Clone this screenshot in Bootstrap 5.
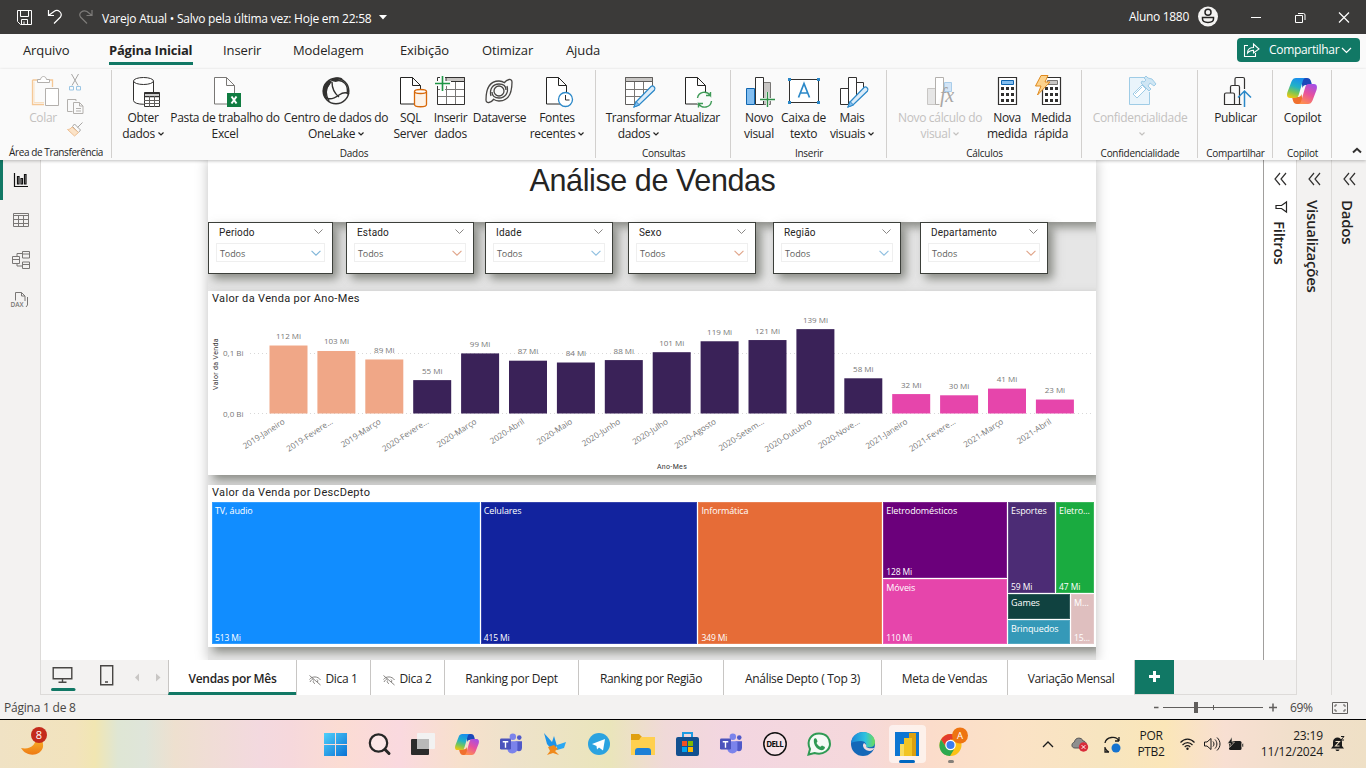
<!DOCTYPE html>
<html lang="pt-BR">
<head>
<meta charset="utf-8">
<title>Varejo Atual</title>
<link rel="stylesheet" href="https://cdn.jsdelivr.net/npm/bootstrap@5.3.0/dist/css/bootstrap.min.css">
<style>
:root{--teal:#117865;--rail:#f3f2f1}
body{font-family:"Open Sans","Noto Sans",sans-serif;font-size:12px;line-height:16px;letter-spacing:-.3px;color:#252423;width:1366px;height:768px;overflow:hidden;background:#fff}
svg{display:block;overflow:visible;flex:none}
svg:not([fill]){fill:none}

/* title bar and menu */
.titlebar{height:34px;background:#3b3a39;color:#fff;padding-left:16px}
.titlebar .doc{padding:4px 0 0 6px;letter-spacing:-.24px}
.controls{gap:34px;margin:0 13px 0 38px}
.menu{height:35px;background:#fafafa;font-size:13px;letter-spacing:-.1px}
.menu a{color:#252423;text-decoration:none;height:31px;line-height:32px;white-space:nowrap}
.menu a+a{margin-left:var(--g)}
.menu a:nth-child(1){width:48px;margin-left:23px}.menu a:nth-child(2){width:84px;--g:38px}.menu a:nth-child(3){width:39px;--g:30px}.menu a:nth-child(4){width:75px;--g:31px}.menu a:nth-child(5){width:50px;--g:32px}.menu a:nth-child(6){width:54px;--g:32px}.menu a:nth-child(7){width:37px;--g:30px}
.menu .on{font-weight:700;border-bottom:3px solid var(--teal);letter-spacing:-.22px}
.share{background:var(--teal);color:#fff;width:123px;height:24px;border-radius:4px;margin:4px 6px 0 auto;font-size:12px;letter-spacing:-.32px}

/* ribbon */
.ribbon{height:91px;background:#fafafa;position:relative;z-index:3;box-shadow:0 1px 3px rgba(0,0,0,.25)}
.grp{height:90px;padding-top:6px;position:relative;display:flex;flex-direction:column}
.grp:not(:last-child)::after{content:"";position:absolute;right:0;top:1px;height:88px;width:1px;background:#d2d0ce}
.grp .lbl{margin-top:auto;margin-bottom:-1px}
.cmd{text-align:center;white-space:nowrap;letter-spacing:-.33px}
.cmd svg{width:32px;height:32px;margin:0 auto 3px}
.cmd .chev{width:6px;height:4px;display:inline-block;margin:0 0 1px 3px}
.lbl{font-size:10px;line-height:13px;text-align:center;letter-spacing:-.28px;white-space:nowrap;height:13px}
.g1 .lbl{letter-spacing:-.4px}
.off{color:#c3c1bf}
.g1{width:112px}.g2{width:484px}.g3{width:135px}.g4{width:156px}.g5{width:195px}.g6{width:116px}.g7{width:75px}.g8{width:59px}
.w52{width:52px}.w112{width:112px}.w110{width:110px}.w39{width:39px}.w41{width:41px}.w57{width:57px}.w58{width:58px}.w67{width:67px}.w50{width:50px}.w40{width:40px}.w49{width:49px}.w48{width:48px}.w92{width:92px}.w42{width:42px}.w46{width:46px}
.pl5{padding-left:5px}.pl9{padding-left:9px}.pl8{padding-left:8px}.pl7{padding-left:7px}
.clip{width:54px;margin-left:16px}
.minis{margin:-1px 0 0 -3px}.minis svg{margin-bottom:7px}
.g3 .cmd{letter-spacing:-.4px}

/* report area */
.work{height:535px}
.rail{width:41px;background:var(--rail);border-right:1px solid #dddbd9}
.rail>div{height:40px;padding-left:12px}
.rail .sel{border-left:3px solid var(--teal);padding-left:9px}
.stage{height:500px;overflow:hidden}
.stage-l{width:167px}.stage-r{width:167px}
.page{width:888px;background:#e6e6e6;box-shadow:0 0 12px rgba(0,0,0,.25);overflow:hidden}
.vis{background:#fff;box-shadow:5px 5px 9px rgba(105,108,100,.75)}
.head{height:62px;font:30.500px/41px "Liberation Sans",sans-serif;letter-spacing:-.4px;text-align:center;padding-left:1px}
.slicers{height:69px}
.slicer{height:52px;border:1px solid #3c3f3a;padding:4px 7px 0 7px}
.slicer b{font:400 10px/12px Roboto,sans-serif;letter-spacing:.18px;padding-left:3px}
.slicer .box{height:19px;border:1px solid #efefef;margin-top:4px;padding:2px 3px 0 3px;font-size:9px;letter-spacing:-.1px;color:#605e5c}
.slicer .hd{padding-right:2px}
.vtitle{font:400 11px/15px Roboto,sans-serif;letter-spacing:.33px;color:#252423;padding-left:4px}
.chart{height:184px;margin-bottom:10px}
.tree{height:162px}
.tiles{height:142px;margin:2px 2px 0 4px;gap:1px;color:#fff;font-size:9px;line-height:11px;letter-spacing:-.12px}
.tile{padding:3px 0 1px 3px;display:flex;flex-direction:column;justify-content:space-between;white-space:nowrap;box-shadow:inset 0 0 0 1px rgba(255,255,255,.15)}
.tile span{font-size:8.500px}
.gap1{gap:1px}
.t1{width:268px;background:#118dff}.t2{width:217px;background:#12239e}.t3{width:184px;background:#e66c37}
.c4{width:124px}.t4{height:76px;background:#6b007b}.t5{background:#e645ab}
.c5{width:86px}.t6{width:47px;background:#4c2c75}.t7{background:#1aab40}.r1{height:91px}
.t8{height:25px;background:#104240}.t9{background:#3599b8}.cc{width:62px}.t10{background:#dfbfbf}

/* side panes, page tabs, status */
.pane{width:35px;background:var(--rail);border-left:1px solid #dddbd9;padding-top:13px}
.pane.filt{width:33px;background:#fff;border-left:1px solid #a19f9d}
.vert{writing-mode:vertical-rl;font-size:15px;line-height:18px;font-weight:600;letter-spacing:-.25px}
.f1{margin-top:8px}.f2{margin-top:15px;position:relative;left:-1px}
.tabs{height:35px;background:var(--rail);border-bottom:1px solid #dddbd9}
.views{width:127px;padding-left:11px}.views svg:nth-child(2){margin-left:26px}.views svg:nth-child(3){margin-left:20px}
.tabp{background:#fff;border-left:1px solid #c8c6c4;text-align:center;line-height:37px;height:35px;letter-spacing:-.32px;white-space:nowrap}
.tabp.on{border-bottom:3px solid var(--teal);font-weight:600;line-height:38px}
.p1{width:128px}.p2{width:74px;padding-top:2px}.p3{width:134px}.p4{width:145px}.p5{width:158px}.p6{width:126px}.p7{width:127px}
.plus{width:40px;background:var(--teal);margin-right:auto;border-left:1px solid #c8c6c4}
.status{height:25px;background:var(--rail);border-bottom:1px solid #000;color:#484644;padding:2px 0 0 4px;letter-spacing:-.22px}
.zoomer{width:128px;margin-right:8px}.pct{width:42px;letter-spacing:-.4px}.fitp{margin-right:18px}

/* taskbar */
.task{height:48px;background:linear-gradient(90deg,#f0e2c4 0,#f2e3bd 75px,#f1e6b2 95px,#dfe6d4 118px,#dfe5da 145px,#eee0cf 175px,#f3d9df 260px,#f6d8dc 290px,#fbdcd3 340px,#fad9df 400px,#f7e0cc 460px,#eee2cb 510px,#eae5bb 610px,#f0d9d8 665px,#f3d6e1 730px,#f5d8dc 850px,#fbdccb 930px,#fbe2c6 1010px,#f7e5c0 1100px,#fbe6b8 1165px,#f8dfd2 1225px,#f1dfcb 1290px,#efe0c6 1366px);letter-spacing:-.35px;color:#1b1b1b}
.app{width:44px;height:48px;display:flex;align-items:center;justify-content:center;position:relative}
.app.live::before{content:"";position:absolute;inset:5px 3px 5px 4px;background:rgba(255,255,255,.6);border-radius:4px}
.app.live::after{content:"";position:absolute;left:14px;bottom:5px;width:16px;height:3px;border-radius:2px;background:#0067c0}
.app.idle::after{content:"";position:absolute;left:19px;bottom:5px;width:6px;height:3px;border-radius:2px;background:#85807a}
.app svg{position:relative;z-index:1}
.wx{width:313px;padding-left:21px}
.tray{margin-left:66px}
.tray>*{flex:none}
.s1{margin-left:3px}.s2{margin-left:18px}.s3{margin-left:14px}.kb{width:42px;margin-left:9px}.s4{margin-left:8px}.s5{margin-left:9px}.s6{margin-left:8px}.clock{width:67px;margin-left:11px;letter-spacing:-.15px}.s7{margin-left:8px}
</style>
</head>
<body>
<svg width="0" height="0" class="position-absolute">
<defs>
<linearGradient id="ca" x1=".5" y1="0" x2=".2" y2="1"><stop offset="0" stop-color="#1a8fec"/><stop offset=".4" stop-color="#22b2c6"/><stop offset=".7" stop-color="#7cc653"/><stop offset="1" stop-color="#f6c70e"/></linearGradient>
<linearGradient id="cb" x1=".8" y1="0" x2=".3" y2="1"><stop offset="0" stop-color="#a34ee8"/><stop offset=".5" stop-color="#e8519d"/><stop offset="1" stop-color="#ff8f4f"/></linearGradient>
<symbol id="copilot" viewBox="0 0 30 26" overflow="visible">
<path fill="#1b48ba" d="M14 0h6c2.500 0 3.500 1.500 4.200 4L25 7h-6c-2 0-3 1-3.500 3z"/>
<path fill="#f0702e" d="M16 26h-6c-2.500 0-3.500-1.500-4.200-4L5 19h6c2 0 3-1 3.500-3z"/>
<path fill="url(#ca)" d="M9 0h10c-2 0-2.800 1.500-3.500 4L12 16c-.8 2.500-1.500 4-4 4H3C0 20-.5 17 .5 14L4.500 3.500C5.500 1 7 0 9 0z"/>
<path fill="url(#cb)" d="M21 26H11c2 0 2.800-1.500 3.500-4L18 10c.8-2.500 1.500-4 4-4h5c3 0 3.500 3 2.500 6l-4 10.500C24.500 25 23 26 21 26z"/>
</symbol>
<symbol id="chev" viewBox="0 0 6 4" overflow="visible"><path d="M.5.5 3 3 5.500.5" fill="none" stroke="currentColor" stroke-width="1.200"/></symbol>
<symbol id="drop" viewBox="0 0 9 5" overflow="visible"><path d="M.5.5l4 4 4-4" fill="none" stroke="currentColor"/></symbol>
<symbol id="teams" viewBox="0 0 26 24" overflow="visible"><circle cx="15" cy="4" r="3.500" fill="#7b83eb"/><circle cx="22" cy="5" r="2.500" fill="#5059c9"/><path fill="#5059c9" d="M18 9h7v7c0 5-6 5-7 1z"/><path fill="#7b83eb" d="M9 9h11v8c0 7-11 7-11 0z"/><rect x="1" y="6" width="12" height="12" rx="1.500" fill="#4b53bc"/><path stroke="#fff" stroke-width="1.500" d="M4 9.500h6M7 9.500V16"/></symbol>
<symbol id="doc" viewBox="0 0 32 32" overflow="visible"><path fill="#fff" stroke="currentColor" d="M5.500 2.500h12l8 8v18.500h-20zM17.500 2.500v8h8"/></symbol>
<symbol id="hide" viewBox="0 0 12 10" overflow="visible"><path fill="none" stroke="#797775" stroke-width=".9" d="M.5 5.500C3 2 9 2 11.500 6M1 8c1-2 2-2.600 3.500-3M.5 1.500l11 9.500M6 9.500a2 2 0 0 1-1.500-3M8 5.500a2 2 0 0 1 .5 2.500"/></symbol>
</defs></svg>

<header class="titlebar d-flex align-items-center">
 <svg width="16" height="16" stroke="#fff"><path d="M1.500 1.500h14v14h-11l-3-3zM4.500 1.500v6h8v-6M5.500 15.500v-5h6v5M8 12.500v3"/></svg>
 <svg width="16" height="16" class="ms-3" stroke="#fff" stroke-width="1.200"><path d="M.5 1v5.500H6M.5 6.500 6 2.500c4-3 9 1.500 6.500 5.500L6 14.500"/></svg>
 <svg width="16" height="16" class="ms-3" stroke="#7d7b79" stroke-width="1.200"><path d="M12 1v5.500H6.500M12 6.500 7 2.500C3 .5-2 4 .5 8L7 14.500"/></svg>
 <span class="doc">Varejo Atual • Salvo pela última vez: Hoje em 22:58</span>
 <svg width="8" height="5" class="ms-2" fill="#fff"><path d="M-1 0h8L3 4.500z"/></svg>
 <span class="ms-auto">Aluno 1880</span>
 <svg width="20" height="20" class="ms-2"><circle cx="11" cy="9.500" r="10" fill="#f3f2f1"/><g stroke="#252423" stroke-width="1.500"><circle cx="11" cy="5.300" r="3"/><path d="M5.500 10.500h11V12c0 4.500-11 4.500-11 0z"/></g></svg>
 <div class="controls d-flex align-items-center">
  <svg width="10" height="10" stroke="#fff"><path d="M-4 5.500h10"/></svg>
  <svg width="10" height="10" stroke="#fff"><path d="M-3.500 3.500h7v7h-7zM-1 1.500h5.500A1.500 1.500 0 0 1 6 3v5"/></svg>
  <svg width="10" height="10" stroke="#fff" stroke-width="1.200"><path d="M-4 .5l10 10M6 .5l-10 10"/></svg>
 </div>
</header>

<nav class="menu d-flex">
 <a>Arquivo</a><a class="on">Página Inicial</a><a>Inserir</a><a>Modelagem</a><a>Exibição</a><a>Otimizar</a><a>Ajuda</a>
 <div class="share d-flex align-items-center">
  <svg width="16" height="14" class="ms-2" stroke="#fff" stroke-width="1.100"><path d="M3 2.500H-.5v11h11V10M2.500 10c0-4 3-5.500 6-5.500V1L14 6 8.500 10V7.200c-3 0-4.500.8-6 2.800z"/></svg>
  <span class="flex-fill ps-1 ms-1">Compartilhar</span>
  <svg width="9" height="5" class="me-2" stroke="#fff" stroke-width="1.200"><path d="M-1 0l4.500 4.500L8 0"/></svg>
 </div>
</nav>

<section class="ribbon d-flex">
 <div class="grp g1"><div class="d-flex off">
   <div class="cmd clip"><svg viewBox="0 0 32 32"><path stroke="#f5c896" stroke-width="1.300" d="M5.500 5v24.500H17M5.500 5H11M22 5h3.500v7"/><path stroke="#f8dfc0" d="M7 6.500v21h10"/><path fill="#fff" stroke="#b3b0ad" d="M10.500 7.500v-3h3c.5-4 5.500-4 6 0h3v3zM18.500 13.500h13v17h-13z"/></svg>Colar</div>
   <div class="minis">
    <svg width="17" height="17"><path stroke="#a8a6a4" d="M4.500 0l6.500 11.500M11.500 0L5 11.500"/><path stroke="#9cc6e4" d="M2.500 12.500h4v3.500h-4zM9.500 12.500h4v3.500h-4z"/></svg>
    <svg width="17" height="17" stroke="#b3b0ad"><path d="M9 3V1.500H.5v12h5M6.500 4.500h6l3.500 3.500v7.500H6.500zM12.500 4.500V8H16M9 10.500h5M9 13h5"/></svg>
    <svg width="17" height="17"><path stroke="#a8a6a4" d="M15.500.5l-5 5M5.500 4.500l6 6 2-2.500-6-6z"/><path fill="#fbe3c8" stroke="#eebf93" d="M5 5C3.500 7 2 7.500 .5 7.500l7 6.500 4-3.500z"/></svg>
   </div></div><div class="lbl mt-0">Área de Transferência</div></div>
 <div class="grp g2"><div class="d-flex pl5">
   <div class="cmd w52"><svg viewBox="0 0 32 32"><path stroke="#323130" fill="#fff" d="M6.500 6v19.500c0 5 20 5 20 0V6"/><ellipse cx="16.500" cy="6" rx="10" ry="3.500" fill="#fff" stroke="#323130"/><path fill="#fff" stroke="#323130" d="M17.500 17.500h15v14h-15z"/><path stroke="#323130" stroke-width="1.500" d="M17 18.500h16M17 21.500h16"/><path stroke="#605e5c" d="M17 25.500h16M17 28.500h16M22.500 21v11M27.500 21v11"/></svg>Obter<br>dados<svg class="chev"><use href="#chev"/></svg></div>
   <div class="cmd w112"><svg viewBox="0 0 32 32"><use href="#doc" color="#797775"/><rect x="18" y="18" width="14" height="14" fill="#107c41"/><path stroke="#fff" stroke-width="2" d="M22.500 21.500l5 7M27.500 21.500l-5 7"/></svg>Pasta de trabalho do<br>Excel</div>
   <div class="cmd w110"><svg viewBox="0 0 32 32"><path fill="#323130" d="M11 6C12 2 21 1 23 4.500c-3-.5-6 .5-7 2.500zM10 5C2 9 0 20 8 25 5 20 6 12 12 7z"/><circle cx="16" cy="16" r="12.800" stroke="#323130" stroke-width="1.500"/><path stroke="#323130" stroke-width="1.400" d="M10 8c-5 6-4 13-1 18M12 7c0 6 2 11 7 15M16 6c7-2 13 4 11 13M5 22c5 4 10 1 14-2 3-2 7-3 10-1"/></svg>Centro de dados do<br>OneLake<svg class="chev"><use href="#chev"/></svg></div>
   <div class="cmd w39"><svg viewBox="0 0 32 32"><use href="#doc"/><path fill="#fdf3e8" stroke="#d8690a" stroke-width="1.300" d="M19.500 16.500v13c0 3 12 3 12 0v-13"/><ellipse cx="25.500" cy="16.500" rx="6" ry="2" fill="#fff" stroke="#d8690a" stroke-width="1.300"/></svg>SQL<br>Server</div>
   <div class="cmd w41"><svg viewBox="0 0 32 32"><path fill="#fff" stroke="#323130" d="M2.500 2.500h27v27h-27z"/><path fill="#c8c6c4" stroke="#323130" d="M11 2.500h18.500v4H11z"/><path stroke="#797775" d="M3 14.500h26M3 21.500h26M11.500 7v22M20.500 7v22"/><path stroke="#fafafa" stroke-width="5" d="M0 8.500h16M7.500 1v14"/><path stroke="#1d9544" stroke-width="1.600" d="M0 8.500h15M7.500 1v15"/></svg>Inserir<br>dados</div>
   <div class="cmd w57"><svg viewBox="0 0 32 32" stroke="#484644" stroke-width="1.300"><path d="M20 8c3-4 8-5 8-1 0 10-3 19-13 19-3 0-6-2-6-2M10 24c-3 4-8 5-8 1C2 15 5 6 15 6c3 0 6 2 6 2"/><circle cx="15" cy="16" r="5"/><path d="M7 21c-2-7 2-12 8-12 4 0 7 2 7 6M23 11c2 7-2 12-8 12-4 0-7-2-7-6"/></svg>Dataverse</div>
   <div class="cmd w58"><svg viewBox="0 0 32 32"><use href="#doc"/><circle cx="24.500" cy="24.500" r="7" fill="#fff" stroke="#2b88c8" stroke-width="1.300"/><path stroke="#323130" d="M24.500 20v5h4"/></svg>Fontes<br>recentes<svg class="chev"><use href="#chev"/></svg></div>
 </div><div class="lbl">Dados</div></div>
 <div class="grp g3"><div class="d-flex pl9">
   <div class="cmd w67"><svg viewBox="0 0 32 32"><path fill="#fff" stroke="#605e5c" d="M2.500 2.500h27v27h-27z"/><path fill="#c8c6c4" stroke="#605e5c" d="M2.500 2.500h27v4h-27z"/><path stroke="#797775" d="M3 14.500h26M3 21.500h26M11.500 7v22M20.500 7v22"/><path fill="#fafafa" d="M12 32l20-22v22z"/><path fill="#dcecf9" stroke="#2b88c8" stroke-width="1.200" d="M13 27L28 11.500c2-1.500 5 1 3.500 3.500L16 30l-5 2z"/><path fill="#83bef0" stroke="#2b88c8" d="M13 26.500l3.500 3.500-5.500 2z"/></svg>Transformar<br>dados<svg class="chev"><use href="#chev"/></svg></div>
   <div class="cmd w50"><svg viewBox="0 0 32 32"><use href="#doc" x="-1"/><circle cx="23.500" cy="25" r="8" fill="#fafafa"/><path stroke="#3e9a56" stroke-width="1.400" d="M16.500 23c1-6 9-8 13-2.500V17M30 20.500h-5M30.500 26c-1 7-9 8-13 3v3.500M17 28.500h5"/></svg>Atualizar</div>
 </div><div class="lbl">Consultas</div></div>
 <div class="grp g4"><div class="d-flex pl8">
   <div class="cmd w40"><svg viewBox="0 0 32 32"><path fill="#83bef0" stroke="#1066b0" d="M3.500 13.500h8v16h-8z"/><path fill="#c8c6c4" stroke="#797775" d="M20.500 7.500h7v22h-7z"/><path fill="#fff" stroke="#323130" d="M12.500 2.500h8v27h-8z"/><path stroke="#fafafa" stroke-width="3" d="M17 24.500h15M24.500 17v15"/><path stroke="#2f9048" stroke-width="1.400" d="M17 24.500h15M24.500 17v15"/></svg>Novo<br>visual</div>
   <div class="cmd w49"><svg viewBox="0 0 32 32"><path fill="#fff" stroke="#323130" d="M1.500 4.500h29v23h-29z"/><path fill="#2b88c8" d="M0 3h3v3H0zM29 3h3v3h-3zM0 26h3v3H0zM29 26h3v3h-3z"/><path stroke="#2b88c8" stroke-width="1.700" d="M10.500 22.500l5.500-14 5.500 14M12.500 18h7"/></svg>Caixa de<br>texto</div>
   <div class="cmd w48"><svg viewBox="0 0 32 32"><path fill="#fff" stroke="#323130" d="M4.500 13.500h8v16h-8zM20.500 7.500h7v22h-7zM12.500 2.500h8v27h-8z"/><path fill="#fafafa" d="M13 32l16-18v17z"/><path fill="#dcecf9" stroke="#2b88c8" stroke-width="1.200" d="M14 27L28 12.500c2-1.500 5 1 3.500 3.500L17 30l-5 2z"/><path fill="#83bef0" stroke="#2b88c8" d="M14 26.500l3.500 3.500-5.500 2z"/></svg>Mais<br>visuais<svg class="chev"><use href="#chev"/></svg></div>
 </div><div class="lbl">Inserir</div></div>
 <div class="grp g5"><div class="d-flex pl7">
   <div class="cmd w92 off"><svg viewBox="0 0 32 32"><path fill="#e6e6e6" stroke="#c8c6c4" d="M3.500 13.500h8v16h-8z"/><path fill="#d3e5f6" stroke="#a9cdea" d="M20.500 7.500h7v9h-7z"/><path fill="#fff" stroke="#b3b0ad" d="M11.500 29.500v-27h8v15M11.500 29.500h4"/><text x="16" y="27" font-family="Liberation Serif" font-style="italic" font-size="20" fill="#a8a6a4" stroke="none">fx</text></svg>Novo cálculo do<br>visual<svg class="chev"><use href="#chev"/></svg></div>
   <div class="cmd w42"><svg viewBox="0 0 32 32"><path fill="#fff" stroke="#323130" stroke-width="1.200" d="M7.500 2.500h18v27h-18z"/><path fill="#83bef0" stroke="#1066b0" d="M10.500 5.500h12v4h-12z"/><path stroke="#323130" stroke-width="3" stroke-dasharray="3 2" d="M10 13.500h13M10 19.500h13M10 25.500h13"/></svg>Nova<br>medida</div>
   <div class="cmd w46"><svg viewBox="0 0 32 32"><path fill="#fff" stroke="#323130" stroke-width="1.200" d="M7.500 2.500h18v27h-18z"/><path fill="#c8c6c4" stroke="#797775" d="M12.500 5.500h10v4h-10z"/><path stroke="#323130" stroke-width="3" stroke-dasharray="3 2" d="M10 13.500h13M10 19.500h13M10 25.500h13"/><path fill="#fcd28c" stroke="#e08a1e" d="M6 .5h7L10 7h5L2.500 20 6 11H.5z"/></svg>Medida<br>rápida</div>
 </div><div class="lbl">Cálculos</div></div>
 <div class="grp g6"><div class="cmd off"><svg viewBox="0 0 32 32" stroke="#9fcce6"><path fill="#e9f4fb" d="M25.500 17v12.500h-20v-27H20"/><path fill="#fff" d="M9 19l9-9 4 4-9 9zM11 19l7-7"/><path fill="#cfe6f4" d="M17 8l8 8 2-2-3-3 2-3 4 3 2-2-4-5-4-1-2-2-2 2 2 2-2 2-2-1z"/></svg>Confidencialidade<br><svg class="chev"><use href="#chev"/></svg></div><div class="lbl">Confidencialidade</div></div>
 <div class="grp g7"><div class="cmd"><svg viewBox="0 0 32 32" stroke="#323130" stroke-width="1.200"><path d="M24.500 14V4A1.500 1.500 0 0 0 23 2.500h-6.500A1.500 1.500 0 0 0 15 4v6.500M19.500 29.500V12a1.500 1.500 0 0 0-1.500-1.500h-6a1.500 1.500 0 0 0-1.500 1.500v6M4.500 29.500V19.500A1.500 1.500 0 0 1 6 18h7a1.500 1.500 0 0 1 1.500 1.500v10zM14 29.500h7.500"/><path stroke="#2b88c8" stroke-width="1.500" d="M24.500 32V16.500M18 22.500l6.500-6.500 6.500 6.500"/></svg>Publicar<br>&nbsp;</div><div class="lbl">Compartilhar</div></div>
 <div class="grp g8"><div class="cmd"><svg viewBox="0 0 32 32"><use href="#copilot" x="0" y="3" width="30" height="26"/></svg>Copilot<br>&nbsp;</div><div class="lbl">Copilot</div></div>
 <div class="ms-auto me-1 align-self-end pb-1"><svg width="10" height="8" stroke="#323130" stroke-width="2"><path d="M1 4.500l4-3.700 4 3.700"/></svg></div>
</section>

<main class="work d-flex">
 <aside class="rail">
  <div class="sel d-flex align-items-center"><svg width="16" height="16" stroke="#111" stroke-width="1.200"><path d="M2.500 1v13.500H16M5.500 4.500H7V12H5.500zM9 6.500h1.500V12H9zM12.500 2.500H14V12h-1.500z"/></svg></div>
  <div class="d-flex align-items-center"><svg width="16" height="16" stroke="#797775"><path d="M1.500 1.500h15v13h-15zM1.500 3.500h15M1.500 7.500h15M1.500 11.500h15M6.500 3.500v11M11.500 3.500v11"/></svg></div>
  <div class="d-flex align-items-center"><svg width="18" height="18" stroke="#797775"><path d="M.5 5.500h7v7h-7zM.5 8.500h7M10.500.5h7v6.500h-7zM10.500 3h7M10.500 11h7v6.500h-7zM10.500 13.500h7M5 5.500V2.500h5.500M5 12.500V15h5.500"/></svg></div>
  <div class="d-flex align-items-center"><svg width="18" height="16" stroke="#797775"><path d="M3.500 8.500V.5h6L13 4v5M9.500.5V4H13M15.500 5v8l-1.500 2"/><text x="-1.500" y="15" font-size="6.500" font-weight="600" stroke="none" fill="#797775" letter-spacing="0">DAX</text></svg></div>
 </aside>
 <div class="d-flex flex-column">
  <div class="stage d-flex">
   <div class="stage-l"></div>
   <div class="page">
    <div class="vis head">Análise de Vendas</div>
    <div class="slicers d-flex" id="slicers"></div>
    <div class="vis chart"><div class="vtitle">Valor da Venda por Ano-Mes</div><svg id="bars" width="888" height="169" viewBox="208 306 888 169"></svg></div>
    <div class="vis tree"><div class="vtitle">Valor da Venda por DescDepto</div>
     <div class="tiles d-flex">
      <div class="tile t1">TV, áudio<span>513 Mi</span></div>
      <div class="tile t2">Celulares<span>415 Mi</span></div>
      <div class="tile t3">Informática<span>349 Mi</span></div>
      <div class="c4 d-flex flex-column gap1"><div class="tile t4">Eletrodomésticos<span>128 Mi</span></div><div class="tile t5 flex-fill">Móveis<span>110 Mi</span></div></div>
      <div class="c5 d-flex flex-column gap1">
       <div class="d-flex gap1 r1"><div class="tile t6">Esportes<span>59 Mi</span></div><div class="tile t7 flex-fill">Eletro...<span>47 Mi</span></div></div>
       <div class="d-flex gap1 flex-fill"><div class="cc d-flex flex-column gap1"><div class="tile t8">Games</div><div class="tile t9 flex-fill">Brinquedos</div></div><div class="tile t10 flex-fill">M...<span>15...</span></div></div>
      </div>
     </div>
    </div>
   </div>
   <div class="stage-r"></div>
   <div class="pane filt d-flex flex-column align-items-center"><svg width="11" height="12" stroke="#323130" stroke-width="1.200"><path d="M5 0L0 6l5 6M11 0L6 6l5 6"/></svg>
    <svg width="12" height="12" class="mt-3" stroke="#252423" stroke-width="1.200"><path d="M12.500 1v10L7.500 7.500H2v-3h5.500z"/></svg><div class="vert f1">Filtros</div></div>
  </div>
  <div class="tabs d-flex">
   <div class="views d-flex">
    <svg width="22" height="30" stroke="#484644" stroke-width="1.400"><path d="M1.200 7.700h18.600v11H1.200zM10.500 19v3M6.500 22.300h8"/><path stroke="#117865" stroke-width="3" stroke-linecap="round" d="M0.500 29.500h21.500"/></svg>
    <svg width="14" height="22" stroke="#484644" stroke-width="1.400"><path d="M.7 5.700h12v19H.7zM5 22h3"/></svg>
    <svg width="28" height="10" fill="#c8c6c4"><path d="M5 13.500v8l-4-4zM22 13.500v8l4.500-4z"/></svg>
   </div>
   <div class="tabp on p1">Vendas por Mês</div>
   <div class="tabp p2 d-flex justify-content-center align-items-center"><svg width="12" height="10" class="me-1"><use href="#hide"/></svg>Dica 1</div>
   <div class="tabp p2 d-flex justify-content-center align-items-center"><svg width="12" height="10" class="me-1"><use href="#hide"/></svg>Dica 2</div>
   <div class="tabp p3">Ranking por Dept</div><div class="tabp p4">Ranking por Região</div><div class="tabp p5">Análise Depto ( Top 3)</div><div class="tabp p6">Meta de Vendas</div><div class="tabp p7">Variação Mensal</div>
   <div class="plus"><svg width="40" height="35" stroke="#fff" stroke-width="3"><path d="M14 16.500h11M19.500 11v11"/></svg></div>
  </div>
 </div>
 <div class="pane d-flex flex-column align-items-center"><svg width="11" height="12" stroke="#323130" stroke-width="1.200"><path d="M5 0L0 6l5 6M11 0L6 6l5 6"/></svg><div class="vert f2">Visualizações</div></div>
 <div class="pane d-flex flex-column align-items-center"><svg width="11" height="12" stroke="#323130" stroke-width="1.200"><path d="M5 0L0 6l5 6M11 0L6 6l5 6"/></svg><div class="vert f2">Dados</div></div>
</main>

<div class="status d-flex align-items-center"><span>Página 1 de 8</span>
 <svg width="128" height="20" class="ms-auto zoomer" stroke="#605e5c"><path stroke-width="1.500" d="M0 9.500h4.500M115 9.500h8M119 5.500v8"/><path d="M9 9.500h100M59.500 7v5"/><path stroke-width="4" d="M42 4v11"/></svg>
 <span class="pct">69%</span>
 <svg width="16" height="12" class="fitp" stroke="#605e5c"><path d="M.5.5h15v11H.5zM5 3H3v2M11 3h2v2M5 9H3V7M11 9h2V7"/></svg>
</div>

<footer class="task d-flex align-items-center">
 <div class="wx"><svg width="28" height="30"><defs><linearGradient id="mn" x2="0" y2="1"><stop stop-color="#fbc02d"/><stop offset="1" stop-color="#ee7a14"/></linearGradient></defs><path fill="url(#mn)" d="M15 6c4 3 8 6 7 12-2 9-16 11-22 1 9 2 16-3 15-13z"/><circle cx="18" cy="6" r="8" fill="#c42b1c"/><text x="18" y="10" font-size="11" fill="#fff" text-anchor="middle" letter-spacing="0">8</text></svg></div>
 <div class="app"><svg width="23" height="23"><defs><linearGradient id="wn" x2="1" y2="1"><stop stop-color="#4fd0fb"/><stop offset="1" stop-color="#0a72d4"/></linearGradient></defs><path fill="url(#wn)" d="M0 0h11v11H0zM12 0h11v11H12zM0 12h11v11H0zM12 12h11v11H12z"/></svg></div>
 <div class="app"><svg width="22" height="22" stroke="#262626" stroke-width="2.200"><circle cx="10.500" cy="10" r="8.700" fill="#fff" fill-opacity=".35"/><path stroke-width="3" stroke-linecap="round" d="M17 16.500l4 4"/></svg></div>
 <div class="app"><svg width="24" height="22"><rect x="0" y="6" width="18" height="16" rx="1" fill="#2b2b2b"/><rect x="6" width="18" height="16" rx="1" fill="#f2f2f2"/><path fill="#b9b9b9" d="M6 6h12v10H6z"/></svg></div>
 <div class="app"><svg width="24" height="21"><use href="#copilot"/></svg></div>
 <div class="app"><svg width="24" height="22"><use href="#teams"/></svg></div>
 <div class="app"><svg width="24" height="22"><path fill="#1d94e8" d="M1 0l8 9 2-6 3 10-4 5-6-7z"/><path fill="#2aa7f2" d="M14 12l9-3-2 6-7 2z"/><path fill="#f08a1c" d="M5 14l6-2 4 4-3 2 4 4-6-2-6 2 3-4z"/></svg></div>
 <div class="app"><svg width="22" height="22"><circle cx="11" cy="11" r="11" fill="#2ba3e0"/><path fill="#fff" d="M4 11l13-5-2 11.500-4-3-2 2-.5-3.500z"/></svg></div>
 <div class="app"><svg width="24" height="22"><path fill="#e0a010" d="M0 1h8l3 3v5H0z"/><path fill="#ffd04f" d="M0 7h8l2-3h14v18H0z"/><path fill="#1d80d6" d="M4 22v-4c0-2 1-3 3-3h10c2 0 3 1 3 3v4z"/></svg></div>
 <div class="app"><svg width="23" height="24"><path stroke="#1e9be2" stroke-width="2" d="M7 6V1h9v5"/><rect y="5" width="23" height="19" rx="2" fill="#12508f"/><path fill="#f25022" d="M6 9h5v5H6z"/><path fill="#7fba00" d="M12 9h5v5h-5z"/><path fill="#00a4ef" d="M6 15h5v5H6z"/><path fill="#ffb900" d="M12 15h5v5h-5z"/></svg></div>
 <div class="app"><svg width="24" height="22"><use href="#teams"/></svg></div>
 <div class="app"><svg width="24" height="24"><circle cx="12" cy="12" r="11.200" fill="#fff" fill-opacity=".3" stroke="#111" stroke-width="1.500"/><text x="11.700" y="15" text-anchor="middle" font-size="8" font-weight="700" fill="#111" letter-spacing="-.6">DELL</text></svg></div>
 <div class="app"><svg width="24" height="24"><path fill="#f5fbf6" stroke="#2f9a54" stroke-width="2" d="M1.500 22.500L3 17C-1 9 4 1.500 12 1.500S23 7 23 12 17 24 7.500 21z"/><path fill="#2f9a54" d="M7 7c1-1.500 2.500-1 3 1l.5 1.500-1 1.500c1 2 2 3 4 3.800L15 13.500l3 1.500c0 3-3 4-6 2.500-3-1.500-6-5.500-5-10.500z"/></svg></div>
 <div class="app"><svg width="24" height="24"><defs><linearGradient id="ed" x2="1"><stop stop-color="#1a86d9"/><stop offset=".6" stop-color="#2fc2df"/><stop offset="1" stop-color="#6fdc55"/></linearGradient></defs><circle cx="12" cy="12" r="12" fill="#1468b8"/><path fill="url(#ed)" d="M0 11C1 4 6 0 12 0c8 0 12 6 12 10 0 5-5 6-9 5 1-3-1-6-5-6-5 0-8 1-10 2z"/><path fill="#f2dcdf" d="M13 11c2 1 3 3 2 4 3 2 6 1 8.500 1-.5 1-2 2.500-4.500 3-5 0-9-5-6-8z"/></svg></div>
 <div class="app live"><svg width="24" height="24"><path fill="#0c75d2" d="M0 0h24v24H0z"/><path fill="#f8dc5f" d="M5 12h8v12H5z"/><path fill="#f2c423" d="M9 6h8v18H9z"/><path fill="#dba010" d="M14 1h7v23h-4V6h-3z"/></svg></div>
 <div class="app idle"><svg width="24" height="24"><circle cx="11.500" cy="13" r="11" fill="#fbc116"/><path fill="#e33b2e" d="M2 7.500C6 0 17 0 21 7.500H11.500L7 15z"/><path fill="#2da94f" d="M2 7.500l6 9 7 1-4 6.500C2 24-2 15 2 7.500z"/><circle cx="11.500" cy="13" r="5.300" fill="#fff"/><circle cx="11.500" cy="13" r="4" fill="#3b7ded"/><circle cx="21" cy="3.500" r="8" fill="#ee7411"/><text x="21" y="7" text-anchor="middle" font-size="9.500" fill="#fff" letter-spacing="0">A</text></svg></div>
 <div class="tray d-flex align-items-center">
  <svg class="s1" width="12" height="7" stroke="#1b1b1b" stroke-width="1.300"><path d="M1 6l5-5 5 5"/></svg>
  <svg class="s2" width="18" height="16"><path fill="#8f8f8f" stroke="#555" d="M3 12c-4 0-4-5-.5-6C3 1 10 1 11 5c4 0 5 7 1 7z"/><circle cx="11.500" cy="11" r="4.700" fill="#d92c3a"/><path stroke="#fff" d="M9.700 9.200l3.600 3.600M13.300 9.200l-3.600 3.600"/></svg>
  <svg class="s3" width="17" height="17" stroke="#1b1b1b" stroke-width="1.300"><path d="M1 7C2 1 12-1 15 5V1M15 5h-4M1 11v5h4M1 12c1 2 2 3 4 4"/><circle cx="12" cy="12" r="4.500" fill="#1573d0" stroke="none"/></svg>
  <div class="kb text-center">POR<br>PTB2</div>
  <svg class="s4" width="15" height="12" stroke="#1b1b1b" stroke-width="1.200"><path d="M.5 4.500c4-4.500 10-4.500 14 0M2.500 7c3-3.300 7-3.300 10 0M4.700 9c2-1.800 3.600-1.800 5.600 0"/><circle cx="7.500" cy="10.800" r="1.200" fill="#1b1b1b" stroke="none"/></svg>
  <svg class="s5" width="16" height="14" stroke="#1b1b1b"><path d="M.5 5v4H3l4 3.500v-11L3 5zM9 4.500c1.300 1.500 1.300 3.500 0 5M11 2.500c2.500 2.500 2.500 6.500 0 9M13 .5c4 3.800 4 9.200 0 13"/></svg>
  <svg class="s6" width="17" height="13"><rect x="1" y="3" width="12.500" height="9" rx="1.500" fill="#1b1b1b"/><path fill="#1b1b1b" d="M14 5.500h1.500v3.500H14zM4-1L-.5 5.500h3L1.500 9.500 6.500 4H4z" stroke="#f3e0d0" stroke-width=".6"/></svg>
  <div class="clock text-end">23:19<br>11/12/2024</div>
  <svg class="s7" width="14" height="16"><path fill="#1b1b1b" d="M0 12.500L2 10V6c0-6 9-6 9 0v4l2 2.500zM4.500 13.500h4c-.5 2-3.500 2-4 0z"/><path stroke="#efe0c6" stroke-width="1.100" d="M4.500 5.500h4L4.500 10h4"/><path stroke="#1b1b1b" d="M10 .5h3L10 4h3"/></svg>
 </div>
</footer>
<script src="https://cdn.jsdelivr.net/npm/bootstrap@5.3.0/dist/js/bootstrap.bundle.min.js"></script>
<script>
// slicers: name, width, gap to the previous one, chevron colour
const filters=[["Periodo",125,0,"#7fb5d8"],["Estado",128,13,"#e0a58a"],["Idade",128,11,"#8fbfe0"],["Sexo",128,15,"#e0a58a"],["Região",128,17,"#8fbfe0"],["Departamento",128,19,"#e0a58a"]];
document.getElementById("slicers").innerHTML=filters.map(([n,w,g,c])=>`<div class="vis slicer" style="width:${w}px;margin-left:${g}px"><div class="hd d-flex justify-content-between"><b>${n}</b><svg width="9" height="5" color="#8a8886"><use href="#drop" y="2"/></svg></div><div class="box d-flex justify-content-between align-items-center">Todos<svg width="10" height="6" color="${c}"><use href="#drop" y="-1"/></svg></div></div>`).join("");
// monthly sales in millions
const data=[["2019-Janeiro",112],["2019-Fevere...",103],["2019-Março",89],["2020-Fevere...",55],["2020-Março",99],["2020-Abril",87],["2020-Maio",84],["2020-Junho",88],["2020-Julho",101],["2020-Agosto",119],["2020-Setem...",121],["2020-Outubro",139],["2020-Nove...",58],["2021-Janeiro",32],["2021-Fevere...",30],["2021-Março",41],["2021-Abril",23]];
const col={2019:"#f0a787",2020:"#3a2258",2021:"#e645ab"};
let s='<g stroke="#d8d8d8" stroke-dasharray="1 3"><path d="M250 353.500H1092M250 413.500H1092"/></g><g font-size="8" fill="#777" letter-spacing="0"><text x="243.500" y="356" text-anchor="end">0,1 Bi</text><text x="243.500" y="417" text-anchor="end">0,0 Bi</text>';
data.forEach(([m,v],i)=>{const x=269.5+i*47.9,h=v*.607,c=x+19;
s+=`<rect x="${x}" y="${413.5-h}" width="38" height="${h}" fill="${col[m.slice(0,4)]}"/><text x="${c}" y="${407-h}" text-anchor="middle">${v} Mi</text><text transform="translate(${c-3} 423) rotate(-33)" text-anchor="end" font-size="8.200">${m}</text>`});
s+='</g><g font-family="Roboto" font-size="7" fill="#333" letter-spacing=".35"><text x="672" y="469" text-anchor="middle">Ano-Mes</text><text transform="translate(218 364) rotate(-90)" text-anchor="middle">Valor da Venda</text></g>';
document.getElementById("bars").innerHTML=s;
</script>
</body>
</html>
